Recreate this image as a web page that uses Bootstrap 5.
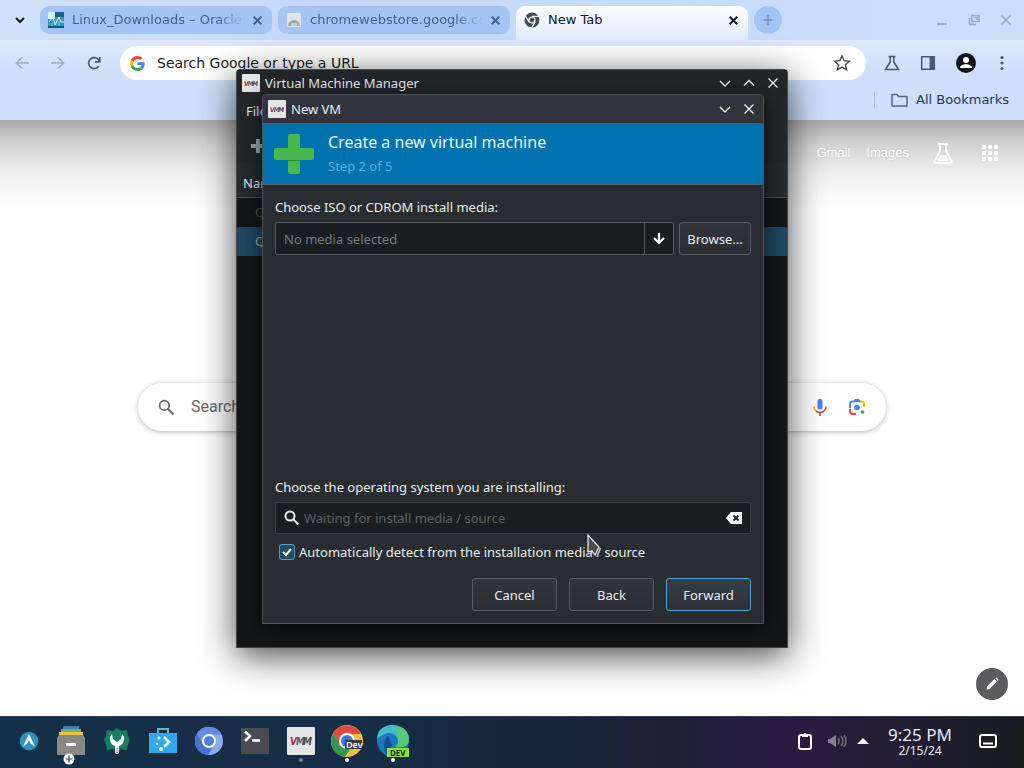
<!DOCTYPE html>
<html lang="en">
<head>
<meta charset="utf-8">
<meta name="viewport" content="width=device-width, initial-scale=1">
<title>New Tab</title>
<link href="https://cdn.jsdelivr.net/npm/bootstrap@5.3.0/dist/css/bootstrap.min.css" rel="stylesheet">
<script src="https://cdn.jsdelivr.net/npm/bootstrap@5.3.0/dist/js/bootstrap.bundle.min.js"></script>
<style>
body{font:13px/20px "Noto Sans",sans-serif;background:#fff;color:#e9ecee}
svg{display:block;flex:none}
button{font:inherit;color:inherit;background:none;border:0;padding:0;flex:none}
.desktop{min-height:100vh}
/* browser */
.chrome{font:13px/20px "DejaVu Sans",sans-serif;color:#1f2a3c}
.strip{height:40px;padding:6px 12px 0;background:linear-gradient(90deg,#d2e1f8,#c3d8fa 30%,#cbdff9)}
.strip .menu-caret{width:16px;height:28px;margin-right:12px}
.tabs{gap:6px;min-width:0}
.btab{flex:0 1 232px;min-width:0;height:28px;padding:0 8px;border-radius:9px;background:#a4c4f3;color:#43618e}
.btab a{min-width:0;color:inherit;text-decoration:none;white-space:nowrap;overflow:hidden;-webkit-mask-image:linear-gradient(90deg,#000 84%,transparent);mask-image:linear-gradient(90deg,#000 84%,transparent)}
.btab button{margin-left:6px}
.btab.current{height:34px;padding-bottom:6px;border-radius:9px 9px 0 0;background:linear-gradient(#fbfdff,#e1ebfc);color:#15181e}
.btab.current a{-webkit-mask-image:none;mask-image:none}
.addtab{width:28px;height:28px;border-radius:50%;background:#a4c4f3;color:#7292c4}
.winctl{color:#99a9c3;gap:18px;height:28px}
.tools{background:linear-gradient(#dde9fc,#cfdff9 40%,#cfdffa);height:80px;padding-top:6px}
.toolrow{height:34px;padding:0 16px 0 14px}
.toolrow .nav-btn{width:16px;margin-right:20px;color:#9fa9b9}
.toolrow .nav-btn.reload{margin-right:18px;color:#4f5c70}
.omni{height:34px;border-radius:17px;background:#fff;padding:0 15px 0 10px}
.omni input{border:0;outline:0;background:none;font:14px/20px "DejaVu Sans",sans-serif;min-width:0;padding:0}
.omni input::placeholder{color:#202124;opacity:1}
.right-tools{color:#4c5970;gap:20px;margin-left:18px}
.books{height:27px;padding:0 15px 0 0;margin-top:6px;color:#213562}
.books .sep{width:1px;height:16px;background:#a5bfe9;margin-right:16px}
.page{background:linear-gradient(#a9a9ac,#d0d0d1 22px,#f0f0f0 54px,#fff 90px)}
.glinks{height:66px;padding:0 25px;color:#fff;font:13px/20px "Liberation Sans",sans-serif}
.glinks a{color:#fff;text-decoration:none;text-shadow:0 0 2px #bbb}
.gsearch{width:748px;max-width:94%;height:48px;border-radius:24px;margin:197px auto 0;padding:0 20px;background:#fff;box-shadow:0 1px 5px rgba(0,0,0,.3)}
.gsearch input{border:0;outline:0;background:none;font:16px/24px Roboto,sans-serif;min-width:0;padding:0}
.gsearch input::placeholder{color:#686a6d;opacity:1}
.lens{margin-left:20px}
.pen{width:32px;height:32px;border-radius:50%;background:#5d5d5f}
/* windows */
.win{position:absolute;left:calc(50% - 276px);top:69px;width:552px;min-height:579px;background:#141618;border:1px solid #43474a;border-radius:4px 4px 0 0;box-shadow:0 8px 36px rgba(0,0,0,.72);z-index:2}
.tbar{height:26px;padding:0 2px 0 5px;background:#23272a}
.tbar svg.logo{margin-right:5px}
.wbtn{width:24px;height:24px;display:flex;align-items:center;justify-content:center;color:#f0f2f3}
.menus{height:33px;padding:5px 9px;background:#24282b}
.acts{height:34px;padding:9px 13px;background:#24282b}
.heads{height:35px;padding:10px 6px;background:#272b2e;border-bottom:1px solid #4d5154}
.lrow{height:29px;padding:4px 18px;color:#4c5053}
.lrow.on{background:#1f4861;color:#9aabb5}
.dlg{position:absolute;left:25px;top:24px;width:502px;min-height:530px;background:#292c30;border:1px solid #505457;border-radius:4px 4px 0 0;box-shadow:0 4px 22px rgba(0,0,0,.7)}
.dlg .tbar{height:28px;background:#31353b;border-radius:4px 4px 0 0}
.banner{background:#0073ae;height:62px;padding:0 11px;gap:14px;border-bottom:1px solid #5d6366;color:#e6f8ff}
.banner h1{font-size:16px;line-height:20px;margin:0;font-weight:400}
.banner p{margin:4px 0 0;color:#4fb3e8}
.dbody{padding:12px}
.dbody .cap{margin-bottom:5px}
.field{height:33px;background:#1a1e20;border:1px solid #565a5d;border-radius:2px}
.field input{min-width:0;border:0;outline:0;background:none;color:#fff;padding:0}
.field input::placeholder{color:#777b7e;opacity:1}
.field.dim{height:32px;border-color:#3c4043}
.field.dim input::placeholder{color:#5f6366}
.drop{width:29px;height:31px;border-left:1px solid #565a5d}
.kbtn{height:33px;border:1px solid #5a5e61;border-radius:3px;background:linear-gradient(#32363c,#2b2f33);min-width:72px}
.kbtn.wide{min-width:85px}
.kbtn.primary{border-color:#49a5d3;background:linear-gradient(#343d47,#2d3338)}
.kcheck{appearance:none;width:16px;height:16px;margin:0;border:1px solid #4ba3cb;border-radius:3px;background:#214b61 url("data:image/svg+xml,%3Csvg xmlns='http://www.w3.org/2000/svg' viewBox='0 0 14 14'%3E%3Cpath d='M3 7l3 3 5-6' fill='none' stroke='white' stroke-width='2'/%3E%3C/svg%3E") center/14px no-repeat}
.pointer{position:absolute;left:349px;top:464px;z-index:5;pointer-events:none}
/* panel */
.panel{height:52px;background:linear-gradient(90deg,#162f48,#162e46 35%,#17283d 50%,#1e2038 66%,#2a1c42 77%,#221d34 88%,#181b20);border-top:1px solid #333c4a;padding:0 26px 3px 10px;z-index:3;position:relative}
.app{width:46px;height:48px;display:flex;align-items:center;justify-content:center;position:relative}
.app:first-child{width:38px}
.app .dot{position:absolute;bottom:3px;left:21px;width:4px;height:4px;border-radius:50%;background:#fff}
.app .dot.off{background:#668eab}
.addmark{left:15px;top:36px}
.clock{width:76px;margin:0 20px 0 12px;text-align:center;font-size:12px;line-height:14px}
.clock b{font-weight:400;font-size:17px;line-height:19px;display:block}
</style>
</head>
<body>
<svg width="0" height="0" class="position-absolute" aria-hidden="true"><defs>
<symbol id="vmm" viewBox="0 0 28 28"><rect width="28" height="28" rx="1" fill="#e4e5e7"/><g font-family="DejaVu Sans Condensed, DejaVu Sans" font-style="italic" font-weight="bold" font-size="10"><text x="3" y="18" fill="#a82c4c">V</text><text x="9" y="18" fill="#555a5f">M</text><text x="16" y="18" fill="#44494e">M</text></g></symbol>
<symbol id="x" viewBox="0 0 12 12"><path d="M2.500 2.500l7 7m0-7l-7 7" fill="none" stroke="currentColor" stroke-width="1.800"/></symbol>
<symbol id="wx" viewBox="0 0 12 12"><path d="M1.500 1.500l9 9m0-9l-9 9" fill="none" stroke="currentColor" stroke-width="1.400"/></symbol>
<symbol id="down" viewBox="0 0 12 12"><path d="M1 4l5 5 5-5" fill="none" stroke="currentColor" stroke-width="1.400"/></symbol>
<symbol id="mag" viewBox="0 0 16 16"><circle cx="6" cy="6" r="4.500" fill="none" stroke="currentColor" stroke-width="2"/><path d="M9.500 9.500l5 5" stroke="currentColor" stroke-width="2"/></symbol>
<symbol id="glass" viewBox="0 0 16 16"><circle cx="6" cy="6" r="4.500" fill="none" stroke="currentColor" stroke-width="1.600"/><path d="M9.500 9.500l5 5" stroke="currentColor" stroke-width="2"/></symbol>
</defs></svg>
<div class="desktop position-relative d-flex flex-column overflow-hidden">
<header class="chrome">
<div class="strip d-flex align-items-start">
<button class="menu-caret" aria-label="Search tabs"><svg width="16" height="28"><path d="M4 12l4 4 4-4" fill="none" stroke="#16181c" stroke-width="2"/></svg></button>
<nav class="tabs d-flex flex-grow-1">
<div class="btab d-flex align-items-center"><svg class="me-2" width="16" height="16"><rect width="16" height="16" fill="#3295bd"/><path d="M0 0h7v7H0z" fill="#d4eff5"/><path d="M7 0h9v5H7z" fill="#126394"/><path d="M1 10l4-5 2 8 4-8 2 5h3" fill="none" stroke="#dbf6f8"/><path d="M4 14v-3m7 3V9" stroke="#8fd0e4"/><path d="M0 15h16" stroke="#075788" stroke-width="2"/></svg><a class="flex-grow-1" href="#">Linux_Downloads – Oracle</a><button aria-label="Close tab"><svg width="13" height="13"><use href="#x"/></svg></button></div>
<div class="btab d-flex align-items-center"><svg class="me-2" width="16" height="16"><rect x="1" y="1" width="14" height="14" rx="1" fill="#e3e4e6"/><path d="M2 14a6 6 0 0 1 12 0h-3a3 3 0 0 0-6 0z" fill="#a4a6a9"/><path d="M5 14a3 3 0 0 1 6 0z" fill="#d2d0cd"/></svg><a class="flex-grow-1" href="#">chromewebstore.google.com</a><button aria-label="Close tab"><svg width="13" height="13"><use href="#x"/></svg></button></div>
<div class="btab current d-flex align-items-center"><svg class="me-2" width="16" height="16" viewBox="0 0 16 16"><circle cx="8" cy="8" r="7.500" fill="#454a50"/><circle cx="8" cy="8" r="3.600" fill="#f5f8fe"/><circle cx="8" cy="8" r="2.300" fill="#454a50"/><path d="M8 4.400h7M4.900 9.800L1.500 4M11.100 9.800L7.500 16" stroke="#f5f8fe" stroke-width="1.300"/></svg><a class="flex-grow-1" href="#">New Tab</a><button aria-label="Close tab"><svg width="13" height="13"><use href="#x"/></svg></button></div>
<button class="addtab" aria-label="New tab"><svg width="28" height="28"><path d="M14 9v10M9 14h10" stroke="currentColor" stroke-width="1.600"/></svg></button>
</nav>
<div class="winctl d-flex align-items-center"><button aria-label="Minimize"><svg width="12" height="12"><path d="M1 10h10" stroke="currentColor" stroke-width="2"/></svg></button><button aria-label="Restore"><svg width="16" height="12"><path d="M6 1.500h7v6H6zM3.500 4v6.500H10M8.500 3.500h2.500v2.500" fill="none" stroke="currentColor" stroke-width="1.600"/></svg></button><button aria-label="Close"><svg width="12" height="12"><use href="#wx"/></svg></button></div>
</div>
<div class="tools">
<div class="toolrow d-flex align-items-center">
<button class="nav-btn" aria-label="Back"><svg width="16" height="16"><path d="M15 8H3m5-5.500L2.500 8 8 13.500" fill="none" stroke="currentColor" stroke-width="1.700"/></svg></button>
<button class="nav-btn" aria-label="Forward"><svg width="16" height="16"><path d="M1 8h12M8 2.500L13.500 8 8 13.500" fill="none" stroke="currentColor" stroke-width="1.700"/></svg></button>
<button class="nav-btn reload" aria-label="Reload"><svg width="16" height="16"><path d="M12.800 11A5.500 5.500 0 1 1 12 4.200L13.500 6M13.800 2v4.800H9" fill="none" stroke="currentColor" stroke-width="1.700"/></svg></button>
<form class="omni flex-grow-1 d-flex align-items-center"><svg width="15" height="15" viewBox="0 0 48 48" class="me-2"><path fill="#EA4335" d="M24 9.500c3.540 0 6.710 1.220 9.210 3.600l6.850-6.850C35.900 2.380 30.470 0 24 0 14.620 0 6.510 5.380 2.560 13.220l7.980 6.190C12.430 13.720 17.740 9.500 24 9.500z"/><path fill="#4285F4" d="M46.980 24.550c0-1.570-.15-3.090-.38-4.550H24v9.020h12.940c-.58 2.960-2.260 5.480-4.780 7.180l7.730 6c4.510-4.180 7.090-10.360 7.090-17.650z"/><path fill="#FBBC05" d="M10.530 28.590a14.500 14.500 0 0 1 0-9.180l-7.980-6.190a24 24 0 0 0 0 21.560z"/><path fill="#34A853" d="M24 48c6.480 0 11.930-2.130 15.890-5.810l-7.730-6c-2.150 1.450-4.920 2.300-8.160 2.300-6.260 0-11.570-4.220-13.470-9.910l-7.980 6.190C6.510 42.620 14.620 48 24 48z"/></svg><input class="flex-grow-1 ms-1" type="text" aria-label="Address" placeholder="Search Google or type a URL"><button type="button" aria-label="Bookmark"><svg width="18" height="18"><path d="M9 1.800l2.100 4.900 5.300.5-4 3.500 1.200 5.200L9 13.100l-4.600 2.800 1.200-5.200-4-3.500 5.300-.5z" fill="none" stroke="#45494f" stroke-width="1.400"/></svg></button></form>
<div class="right-tools d-flex align-items-center"><button aria-label="Labs"><svg width="16" height="16"><path d="M4.500 1.500h7M6.200 2v5L1.500 14.500h13L9.800 7V2" fill="none" stroke="currentColor" stroke-width="1.600"/></svg></button><button aria-label="Side panel"><svg width="16" height="16"><path d="M1.700 1.700h12.600v12.600H1.700z" fill="none" stroke="currentColor" stroke-width="1.500"/><path d="M9.500 1h5.500v14H9.500z" fill="currentColor"/></svg></button><button aria-label="Profile"><svg width="20" height="20"><circle cx="10" cy="10" r="10" fill="#11151b"/><circle cx="10" cy="7" r="3" fill="#fff"/><path d="M4 15c0-5 12-5 12 0z" fill="#fff"/></svg></button><button aria-label="More"><svg width="12" height="16"><g fill="currentColor"><circle cx="6" cy="2.500" r="1.600"/><circle cx="6" cy="8" r="1.600"/><circle cx="6" cy="13.500" r="1.600"/></g></svg></button></div>
</div>
<div class="books d-flex align-items-center justify-content-end"><span class="sep"></span><svg class="me-2" width="17" height="14"><path d="M1 1.500h5l1.500 2H16v9.500H1z" fill="none" stroke="#536684" stroke-width="1.500" stroke-linejoin="round"/></svg><a href="#" class="text-decoration-none text-reset">All Bookmarks</a></div>
</div>
</header>
<main class="page flex-grow-1 d-flex flex-column">
<div class="glinks d-flex align-items-center justify-content-end"><a href="#" class="me-3">Gmail</a><a href="#">Images</a><svg class="ms-4" width="20" height="22" viewBox="0 0 20 22"><path d="M5 2h10M7 2v7L1.500 19q-.5 2 1.500 2h14q2 0 1.500-2L13 9V2" fill="none" stroke="#fff" stroke-width="2"/><path d="M7 13h6l3 6H4z" fill="#fff"/></svg><svg class="ms-4" width="22" height="18" viewBox="-4 0 22 18"><path d="M3 3h.010M9 3h.010M15 3h.010M3 9h.010M9 9h.010M15 9h.010M3 15h.010M9 15h.010M15 15h.010" stroke="#fff" stroke-width="4.500" stroke-linecap="round"/></svg></div>
<form class="gsearch d-flex align-items-center"><svg class="me-3" style="color:#66686b" width="17" height="17"><use href="#glass"/></svg><input class="flex-grow-1" type="text" placeholder="Search" aria-label="Search">
<button type="button" aria-label="Voice search"><svg width="16" height="20" viewBox="0 0 16 20"><rect x="5.500" y="2" width="5" height="10.500" rx="2" fill="#4285f4"/><path d="M2 9.500a6 6 0 0 0 2 4.500" stroke="#fbbc04" stroke-width="1.700" fill="none"/><path d="M4 14q4 3 8 0" stroke="#ea4335" stroke-width="1.700" fill="none"/><path d="M12 14a6 6 0 0 0 2-4.500" stroke="#ea4335" stroke-width="1.700" fill="none"/><path d="M8 15.500V19" stroke="#8a6a4a" stroke-width="1.700"/></svg></button>
<button type="button" class="lens" aria-label="Search by image"><svg width="18" height="18" viewBox="0 0 18 18" fill="none" stroke-width="1.900"><path d="M2 8V6q0-2.500 2.500-2.500H6L7.500 2h3L12 3.500h1" stroke="#4285f4"/><path d="M7 2.500h4" stroke="#4285f4" stroke-width="3"/><path d="M12 3.500h1.500Q16 3.500 16 6v3" stroke="#fbbc04"/><path d="M2 7v3" stroke="#9663d5"/><path d="M2 11v2q0 3 3 3h3" stroke="#ea4335"/><circle cx="9" cy="9.500" r="2.800" fill="#4285f4"/><circle cx="14.500" cy="14" r="1.800" fill="#34a853"/></svg></button></form>
<div class="mt-auto d-flex justify-content-end p-3"><button class="pen" aria-label="Customize"><svg width="32" height="32"><path d="M10.500 21.500l.5-3 7.500-7.500 2.500 2.500-7.500 7.500zM19.300 10.200l1-1 2.500 2.500-1 1z" fill="#fff"/></svg></button></div>
</main>
<section class="win" aria-label="Virtual Machine Manager">
<div class="tbar d-flex align-items-center"><svg class="logo" width="18" height="18"><use href="#vmm"/></svg><span class="flex-grow-1">Virtual Machine Manager</span><button class="wbtn" aria-label="Minimize"><svg width="12" height="12"><use href="#down"/></svg></button><button class="wbtn" aria-label="Maximize"><svg width="12" height="12" viewBox="0 0 12 12"><path d="M1 8.500l5-5 5 5" fill="none" stroke="currentColor" stroke-width="1.400"/></svg></button><button class="wbtn" aria-label="Close"><svg width="12" height="12"><use href="#wx"/></svg></button></div>
<div class="menus">File</div>
<div class="acts"><svg width="16" height="16"><path d="M8 1v14M1 8h14" stroke="#a7abad" stroke-width="4"/></svg></div>
<div class="heads">Name</div>
<div class="lrow">Q</div><div class="lrow on">Q</div>
<section class="dlg d-flex flex-column" aria-label="New VM">
<div class="tbar d-flex align-items-center"><svg class="logo" width="18" height="18"><use href="#vmm"/></svg><span class="flex-grow-1">New VM</span><button class="wbtn" aria-label="Minimize"><svg width="12" height="12"><use href="#down"/></svg></button><button class="wbtn" aria-label="Close"><svg width="12" height="12"><use href="#wx"/></svg></button></div>
<div class="banner d-flex align-items-center"><svg width="40" height="40"><rect x="14" width="12" height="40" rx="2" fill="#4ab64e"/><rect y="14" width="40" height="12" rx="2" fill="#4ab64e"/><path d="M14 26.500h12" stroke="#278b46"/></svg><div><h1>Create a new virtual machine</h1><p>Step 2 of 5</p></div></div>
<form class="dbody flex-grow-1 d-flex flex-column">
<label for="media" class="cap">Choose ISO or CDROM install media:</label>
<div class="d-flex" style="gap:5px"><div class="field flex-grow-1 d-flex"><input id="media" class="flex-grow-1 ps-2" type="text" placeholder="No media selected"><button type="button" class="drop" aria-label="Show media"><svg width="28" height="31"><path d="M14 10v10M9 15l5 5 5-5" fill="none" stroke="#fff" stroke-width="2.200"/></svg></button></div><button type="button" class="kbtn">Browse...</button></div>
<label for="os" class="mt-auto cap">Choose the operating system you are installing:</label>
<div class="field dim d-flex align-items-center px-2"><svg width="16" height="16" class="me-1"><use href="#mag"/></svg><input id="os" class="flex-grow-1" type="text" placeholder="Waiting for install media / source"><button type="button" aria-label="Clear"><svg width="16" height="12"><path d="M0 6l5-6h11v12H5z" fill="#fff"/><path d="M7.500 3.500l5 5m0-5l-5 5" stroke="#1a1e20" stroke-width="1.800"/></svg></button></div>
<div class="d-flex align-items-center gap-1 ps-1 mt-2"><input class="kcheck" type="checkbox" id="auto" checked><label for="auto">Automatically detect from the installation media / source</label></div>
<div class="d-flex justify-content-end mt-3" style="gap:12px"><button type="button" class="kbtn wide">Cancel</button><button type="button" class="kbtn wide">Back</button><button type="button" class="kbtn wide primary">Forward</button></div>
</form>
</section>
<svg class="pointer" width="14" height="24"><path d="M2 1v17l4-1 3 4 2-4 2-4z" fill="#4f4b4c" stroke="#f0f0f0" stroke-width="1.200"/></svg>
</section>
<footer class="panel d-flex align-items-center">
<div class="d-flex flex-grow-1">
<button class="app" aria-label="Launcher"><svg width="20" height="20"><circle cx="10" cy="10" r="9.300" fill="#2e91c0"/><path d="M10 3L4 15.500l4.500-3L10 9l1.500 3.500 4.500 3z" fill="#fff"/></svg></button>
<button class="app" aria-label="Files"><svg width="32" height="32" viewBox="0 2 32 32"><path d="M8 3h16v5H8z" fill="#397fc4"/><path d="M6 6h20v5H6z" fill="#67bc59"/><path d="M4 9h24v5H4z" fill="#f2be49"/><path d="M4 12h24l2 3v17H2V15z" fill="#8b8785"/><rect x="11" y="20" width="10" height="3" rx="1" fill="#fff"/></svg><svg class="addmark position-absolute" width="12" height="12"><circle cx="6" cy="6" r="5.500" fill="#fff"/><path d="M6 2.500v7M2.500 6h7" stroke="#24435b" stroke-width="1.200"/></svg></button>
<button class="app" aria-label="Settings"><svg width="28" height="30" viewBox="0 0 28 30"><path d="M14 2l4 3 6-1 1 6 2 4-2 4-1 6-6-1-4 3-4-3-6 1-1-6-2-4 2-4 1-6 6 1z" fill="#15805f"/><path d="M9 8q-3 3-2 6 1 5 5 6v6q0 2 2 2t2-2v-6q4-1 5-6 1-3-2-6l-1 5-4 3-4-3z" fill="#fff"/><path d="M14 22v5" stroke="#d8a0b1" stroke-width="2"/></svg></button>
<button class="app" aria-label="Software"><svg width="28" height="28" viewBox="0 0 28 28"><path d="M9 6V2h10v4" fill="none" stroke="#56c0cd" stroke-width="2"/><path d="M0 6h28v20H0z" fill="#31a7ec"/><path d="M15 10l5 5-5 5" fill="none" stroke="#fff" stroke-width="2.500"/><circle cx="10" cy="11" r="1.500" fill="#fff"/><circle cx="8" cy="17" r="1" fill="#fff"/><circle cx="12" cy="22" r="2" fill="#fff"/></svg></button>
<button class="app" aria-label="Chromium"><svg width="28" height="28"><circle cx="14" cy="14" r="14" fill="#8cabef"/><path d="M14 14H7L2 6.500A14 14 0 0 1 26.500 7.500H14z" fill="#688ae1"/><path d="M2 6.500A14 14 0 0 0 13 28l6-10H9z" fill="#4774d1"/><circle cx="14" cy="14" r="7" fill="#fff"/><circle cx="14" cy="14" r="5" fill="#4e80dd"/></svg></button>
<button class="app" aria-label="Terminal"><svg width="28" height="26"><rect width="28" height="26" rx="1" fill="#494b50"/><path d="M4 3.500l5 4.500-5 5" fill="none" stroke="#fff" stroke-width="2.500"/><path d="M11 12.500h8" stroke="#fff" stroke-width="2.500"/></svg></button>
<button class="app" aria-label="Virtual Machine Manager"><svg width="28" height="28"><use href="#vmm"/></svg><span class="dot off"></span></button>
<button class="app" aria-label="Chrome Dev"><svg width="34" height="32"><circle cx="17" cy="16" r="16" fill="#eac043"/><path d="M17 9H31A16 16 0 0 0 3 8.500L9 20z" fill="#df4a3e"/><path d="M3 8.500A16 16 0 0 0 15 32l7-11H10z" fill="#319851"/><circle cx="17" cy="16" r="8" fill="#fff"/><circle cx="17" cy="16" r="6" fill="#3979d4"/><rect x="15" y="15" width="17" height="9" fill="#37393c"/><text x="16" y="23" font-family="Noto Sans" font-size="9" font-weight="600" fill="#fff">Dev</text></svg><span class="dot"></span></button>
<button class="app" aria-label="Edge Dev"><svg width="34" height="32"><circle cx="17" cy="16" r="16" fill="#1877bd"/><path d="M1 14C1-5 32-4 33 14q0 10-14 8 6-5 1-11Q13 4 1 14z" fill="#42bccd"/><path d="M19 1q13 1 14 13 0 10-14 8 6-5 1-11 2-4-1-10z" fill="#56c979"/><path d="M12 11q-8 9 0 21l7 .5q-7-5-3-13z" fill="#114f91"/><rect x="11" y="23" width="22" height="9" fill="#90e328"/><text x="14" y="30.500" font-family="Noto Sans" font-size="8" font-weight="bold" fill="#0b2015">DEV</text></svg><span class="dot"></span></button>
</div>
<button class="me-3" aria-label="Clipboard"><svg width="14" height="18"><rect x="1" y="3" width="12" height="14" rx="2" fill="none" stroke="#fff" stroke-width="2"/><path d="M4 5V3h1q2-4 4 0h1v2z" fill="#fff"/></svg></button>
<button class="me-2" aria-label="Volume"><svg width="20" height="16"><path d="M0 6h2l6-4v12l-6-4H0z" fill="#86808f"/><path d="M10 5q2 3 0 6M13 3q4 5 0 10M16 2q4 6 0 12" fill="none" stroke="#77717f" stroke-width="1.500"/></svg></button>
<button aria-label="Show hidden icons"><svg width="14" height="8"><path d="M1 7l6-6 6 6z" fill="#fff"/></svg></button>
<div class="clock"><b>9:25 PM</b>2/15/24</div>
<button aria-label="Notifications"><svg width="20" height="16"><rect x="2" y="2" width="16" height="12" rx="2" fill="none" stroke="#fff" stroke-width="2"/><path d="M5 10.500h10" stroke="#fff" stroke-width="2"/></svg></button>
</footer>
</div>
</body>
</html>
